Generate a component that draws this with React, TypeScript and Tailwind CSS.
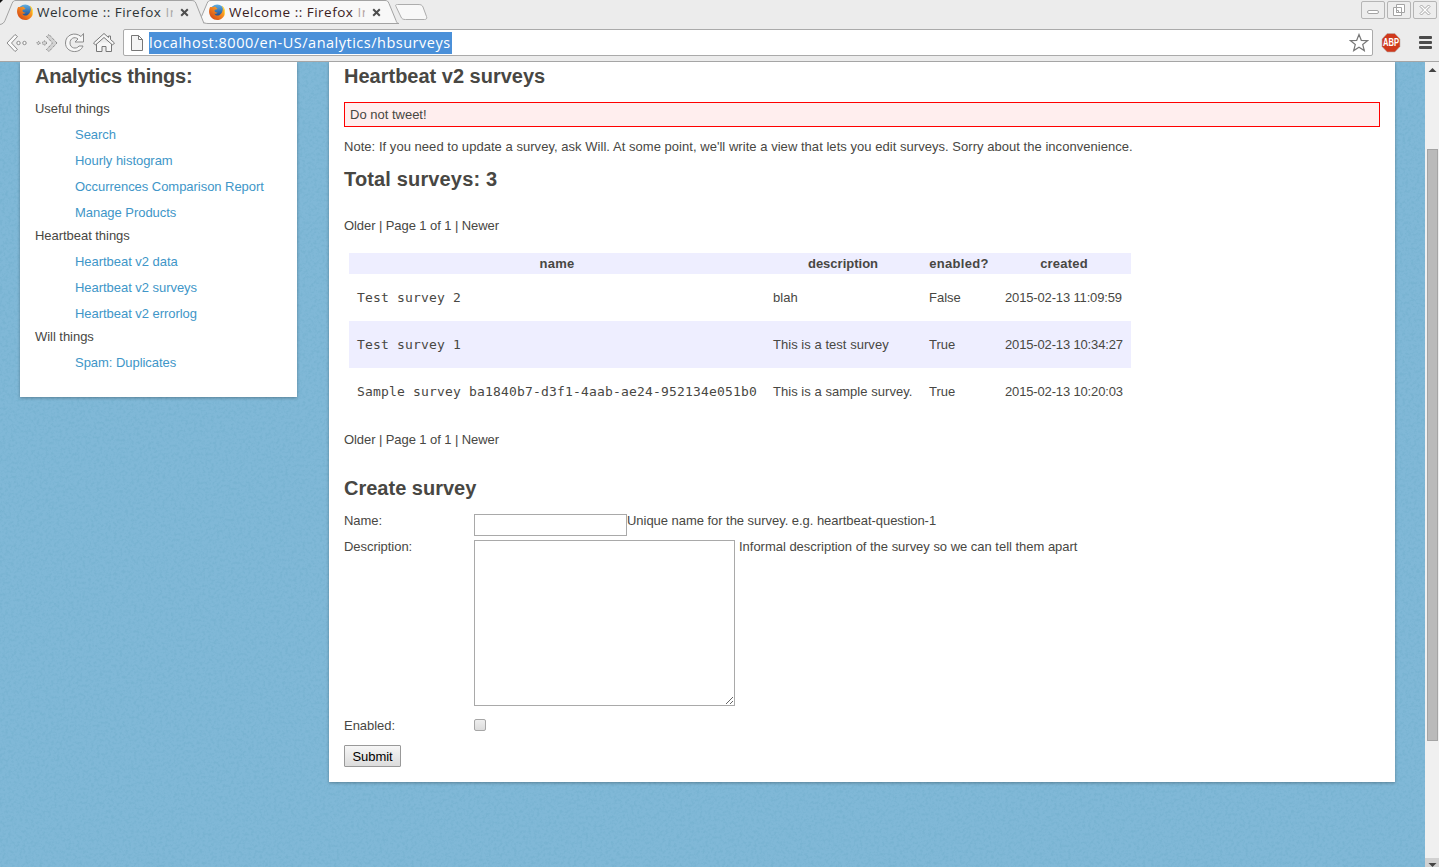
import type { ReactNode } from "react";

const sidebar = [
  {
    title: "Useful things",
    links: ["Search", "Hourly histogram", "Occurrences Comparison Report", "Manage Products"],
  },
  {
    title: "Heartbeat things",
    links: ["Heartbeat v2 data", "Heartbeat v2 surveys", "Heartbeat v2 errorlog"],
  },
  { title: "Will things", links: ["Spam: Duplicates"] },
];

const surveys = [
  { name: "Test survey 2", description: "blah", enabled: "False", created: "2015-02-13 11:09:59" },
  { name: "Test survey 1", description: "This is a test survey", enabled: "True", created: "2015-02-13 10:34:27" },
  {
    name: "Sample survey ba1840b7-d3f1-4aab-ae24-952134e051b0",
    description: "This is a sample survey.",
    enabled: "True",
    created: "2015-02-13 10:20:03",
  },
];

const FirefoxIcon = () => (
  <svg width="16" height="16" viewBox="0 0 16 16" className="shrink-0">
    <defs>
      <linearGradient id="fox" x1="1" y1="0" x2="0" y2="1">
        <stop offset="0" stopColor="#ffd23a" />
        <stop offset="0.45" stopColor="#f5871f" />
        <stop offset="1" stopColor="#c93a12" />
      </linearGradient>
      <linearGradient id="globe" x1="0" y1="0" x2="0" y2="1">
        <stop offset="0" stopColor="#5fb0e6" />
        <stop offset="1" stopColor="#123a80" />
      </linearGradient>
    </defs>
    <circle cx="8.2" cy="7.4" r="7" fill="url(#globe)" />
    <path
      d="M1 3.2C.2 5 0 6.600.1 8.300.5 12.800 4 16 8.200 16c4.300 0 7.700-3.400 7.800-7.800 0-3-1.300-5.400-3.300-6.800.8 1.200 1.200 2.400 1.100 3.600-.4 4.600-3.200 7-6 6.500-1.400-.3-2.300-1.200-2.400-2 1.200.5 2.400.1 3.300-.7-2.200 0-3.400-1.100-3.200-2.300.1-.9 1-1.100 2-.8 0-.8.6-1.100 1.200-1.500-1.400-.2-2.100-.8-2.400-1.700-.9 0-1.900.2-2.500.7C2.600 3 1.600 2.800 1 3.200Z"
      fill="url(#fox)"
    />
    <path d="M12.700 1.400c2 1.500 3.300 3.800 3.300 6.800 0 1.500-.4 3-1.200 4.200 1-3.800.4-8-2.100-11Z" fill="#ffe04d" />
  </svg>
);

const Tab = ({ textColor, fadeColor }: { textColor: string; fadeColor: string }) => (
  <div className="flex h-6 w-[192px] items-center pl-[17px]">
    <FirefoxIcon />
    <span
      className={`ml-1 flex w-[136px] overflow-hidden whitespace-pre font-['Open_Sans'] text-[13.5px] leading-6 tracking-[0.5px] ${textColor}`}
    >
      Welcome :: Firefox <span className={fadeColor}>In</span>
    </span>
    <svg width="9" height="9" viewBox="0 0 9 9" className="ml-[7px] shrink-0">
      <path d="M1.200 1.200l6.600 6.600m0-6.600l-6.600 6.600" stroke="#4d4d4d" strokeWidth="2" />
    </svg>
  </div>
);

const WindowButton = ({ children }: { children: ReactNode }) => (
  <div className="flex h-[18px] w-6 items-center justify-center rounded-[2px] border border-[#b5b5b5] bg-[#ededed]">
    <svg width="14" height="14" viewBox="0 0 14 14" fill="#fff" stroke="#a4a4a4">
      {children}
    </svg>
  </div>
);

const TabStrip = () => (
  <div className="relative flex h-6 justify-between">
    <svg width="440" height="26" viewBox="0 0 440 26" className="absolute top-0 left-0">
      <path d="M0 0h3L0 3Z" fill="#111" />
      <path
        d="M208 23.500c-5 0-8-3-6.500-7l5.500-13c1-2.500 2-3 4-3h174c2 0 3 .5 4 3l7 17c.6 1.800 1 3 3 3Z"
        fill="#f8f8f8"
        stroke="#a3a3a3"
      />
      <path d="M0 24.500c3-.5 4-2 5-4l7-17C13 1 14 .5 16 .5h175c3 0 4 .5 5 3l8 20" fill="#ececec" stroke="#a3a3a3" />
      <path
        d="M396 6.500c-1-1.500 0-2 1.500-2h20.500c3 0 4 .5 5 2.500l3.500 9.500c.8 2-.2 3-2 3h-19c-2.500 0-3.500-.5-4.500-2.500Z"
        fill="#f8f8f8"
        stroke="#adadad"
      />
    </svg>
    <div className="relative flex">
      <Tab textColor="text-[#2e3436]" fadeColor="text-[#aaa]" />
      <Tab textColor="text-[#3a2022]" fadeColor="text-[#b5a4a4]" />
    </div>
    <div className="mt-px mr-0.5 flex gap-0.5">
      <WindowButton>
        <rect x="1.500" y="7.500" width="11" height="3" rx="1.500" />
      </WindowButton>
      <WindowButton>
        <path d="M4.500 1.500h8v8h-8Z M1.500 4.500h8v8h-8Z M4.500 7.500h2v2h-2Z" />
      </WindowButton>
      <WindowButton>
        <path d="M2 3.500 3.500 2 7 5.500 10.500 2 12 3.500 8.500 7 12 10.500 10.500 12 7 8.500 3.500 12 2 10.500 5.500 7Z" />
      </WindowButton>
    </div>
  </div>
);

const Toolbar = () => (
  <div className="flex h-[38px] items-center border-b border-[#a5a5a5] pr-[7px] pl-1.5">
    <svg width="22" height="20" viewBox="0 0 22 20" fill="#fafafa" stroke="#8b8b8b" className="shrink-0">
      <path d="M1 10 9 1.500 11.500 3.500 5.500 10l6 6.500L9 18.500Z" />
      <circle cx="12.500" cy="10" r="1.700" />
      <circle cx="18.500" cy="10" r="1.700" />
    </svg>
    <svg width="22" height="20" viewBox="0 0 22 20" fill="#d2d2d2" stroke="#6d6d6d" className="ml-2 shrink-0">
      <path d="M21 10 13 1.500 10.500 3.500l6 6.500-6 6.500 2.500 2Z" strokeDasharray="1 1" />
      <circle cx="2.500" cy="10" r="1.500" strokeDasharray="1 1" />
      <circle cx="8.500" cy="10" r="2" strokeDasharray="1 1" />
    </svg>
    <svg width="22" height="22" viewBox="0 0 22 22" fill="#f6f6f6" stroke="#8b8b8b" className="ml-1.5 shrink-0">
      <path d="M19.500 1.500v8.500h-8.500l3-3C10.500 4 6 6.500 6 11c0 5.500 6.500 6.500 9 3h4C16 22.500 1.500 21 1.500 11c0-8.500 9.500-11.500 15.500-6.500Z" />
    </svg>
    <svg width="24" height="22" viewBox="0 0 24 22" fill="#f6f6f6" stroke="#777" className="ml-1.5 shrink-0">
      <path d="M4.500 10.500v9h5.500v-5h4v5h5.500v-9" />
      <path d="M12 1.500 1.500 11l2 2L12 5.500l8.500 7.500 2-2-4-3.500V4h-2v1.500Z" />
    </svg>
    <div className="ml-[7px] flex h-[27px] w-[1250px] items-center rounded-[2px] border border-[#aaa] bg-white pl-[7px]">
      <svg width="12" height="16" viewBox="0 0 12 16" fill="#f4f4f4" stroke="#777" className="shrink-0">
        <path d="M.5.5h7l4 4v11H.5Z M7.500.5v4h4" />
      </svg>
      <span className="ml-[6px] h-[22px] w-[303px] whitespace-nowrap bg-[#4a90d9] font-['Open_Sans'] text-[14.5px] leading-[22px] tracking-[0.5px] text-white">
        localhost:8000/en-US/analytics/hbsurveys
      </span>
      <svg width="20" height="20" viewBox="0 0 20 20" className="mr-[3px] ml-auto">
        <path
          d="M10 1.500l2.300 5.800 6.200.3-4.800 3.900 1.600 6.100L10 14.200l-5.300 3.400 1.600-6.100L1.500 7.600l6.200-.3Z"
          fill="#fff"
          stroke="#777"
          strokeWidth="1.200"
        />
      </svg>
    </div>
    <svg width="20" height="20" viewBox="0 0 20 20" className="ml-2 shrink-0">
      <path d="M6.200.5h7.600l5.200 5.500v7.600L13.800 19H6.200L1 13.600V6Z" fill="#d0391c" stroke="#b9b0ae" strokeWidth="0.600" />
      <text
        x="10"
        y="13.300"
        textAnchor="middle"
        textLength="16"
        lengthAdjust="spacingAndGlyphs"
        className="fill-white font-['Liberation_Sans'] text-[10px] font-bold"
      >
        ABP
      </text>
    </svg>
    <div className="ml-auto flex flex-col gap-0.5">
      <div className="h-[3px] w-[13px] rounded-[1px] bg-[#4a4a4a]" />
      <div className="h-[3px] w-[13px] rounded-[1px] bg-[#4a4a4a]" />
      <div className="h-[3px] w-[13px] rounded-[1px] bg-[#4a4a4a]" />
    </div>
  </div>
);

const Sidebar = () => (
  <nav className="h-[335px] w-[277px] shrink-0 bg-white px-[15px] shadow-[0_1px_3px_rgba(0,0,0,0.3)]">
    <h2 className="pt-0.5 text-[20px] leading-6 font-bold tracking-[-0.22px]">Analytics things:</h2>
    <ul className="mt-[11px] tracking-[-0.04px]">
      {sidebar.map((group) => (
        <li key={group.title} className="mb-[3px]">
          <div className="h-5">{group.title}</div>
          <ul className="pl-10">
            {group.links.map((link) => (
              <li key={link} className="h-[26px] pt-1.5 text-[#4096c8]">
                <a>{link}</a>
              </li>
            ))}
          </ul>
        </li>
      ))}
    </ul>
  </nav>
);

const Pager = () => <p className="tracking-[-0.08px]">Older | Page 1 of 1 | Newer</p>;

const SurveyTable = () => (
  <table className="ml-[5px] w-[782px] table-fixed">
    <thead>
      <tr className="h-[21px] bg-[#eeeeff]">
        <th className="w-[416px] p-0 tracking-[0.25px]">name</th>
        <th className="w-[156px] p-0">description</th>
        <th className="w-[76px] p-0 tracking-[0.3px]">enabled?</th>
        <th className="w-[134px] p-0 tracking-[0.2px]">created</th>
      </tr>
    </thead>
    <tbody>
      {surveys.map((survey) => (
        <tr key={survey.name} className="h-[47px] whitespace-nowrap even:bg-[#eeeeff]">
          <td className="px-2 py-0 font-['DejaVu_Sans_Mono'] tracking-[0.175px]">{survey.name}</td>
          <td className="px-2 py-0 tracking-[0.04px]">{survey.description}</td>
          <td className="px-2 py-0">{survey.enabled}</td>
          <td className="px-2 py-0 tracking-[-0.15px]">{survey.created}</td>
        </tr>
      ))}
    </tbody>
  </table>
);

const SurveyForm = () => (
  <form className="tracking-[-0.04px]">
    <div className="flex h-[29px] items-start">
      <label className="w-[130px]">Name:</label>
      <input className="mt-[3px] h-[22px] w-[153px] border border-[#a9a9a9] bg-white" />
      <span>Unique name for the survey. e.g. heartbeat-question-1</span>
    </div>
    <div className="flex h-[175px] items-start">
      <label className="-mt-[3px] w-[130px]">Description:</label>
      <textarea className="h-[166px] w-[261px] resize border border-[#a9a9a9] bg-white" />
      <span className="-mt-[3px] ml-1 tracking-[-0.02px]">Informal description of the survey so we can tell them apart</span>
    </div>
    <div className="flex h-[30px] items-start">
      <label className="mt-px w-[130px]">Enabled:</label>
      <input
        type="checkbox"
        className="mt-1 h-3 w-3 appearance-none rounded-[2px] border border-[#a6a6a6] bg-linear-to-b from-[#eee] to-[#dcdcdc]"
      />
    </div>
    <button className="h-[22px] w-[57px] rounded-[1px] border border-[#999] bg-linear-to-b from-[#f6f6f6] to-[#dcdcdc] pt-px text-black">
      Submit
    </button>
  </form>
);

const Scrollbar = () => (
  <div className="flex w-3.5 shrink-0 flex-col items-center bg-[#f0f0f0]">
    <svg width="14" height="15" viewBox="0 0 14 15">
      <path d="M3.500 10 7.500 6l4 4Z" fill="#444" />
    </svg>
    <div className="mt-[72px] ml-px h-[592px] w-[11px] border border-[#a4a4a4] bg-[#bababa]" />
    <div className="mt-auto h-[9px] w-3.5 bg-[#d1d1d1]">
      <svg width="14" height="9" viewBox="0 0 14 9">
        <path d="M3.500 5h8l-4 4Z" fill="#444" />
      </svg>
    </div>
  </div>
);

const App = () => {
  return (
    <div className="flex h-[867px] w-[1439px] flex-col overflow-hidden bg-[#ececec] font-['Liberation_Sans',sans-serif] text-[13px] leading-5 text-[#484743]">
      <TabStrip />
      <Toolbar />
      <div className="flex min-h-0 flex-1">
        <div className="relative flex flex-1 items-start overflow-hidden bg-[#80b8d7] pl-5">
          {/* paper grain over the blue background */}
          <svg className="absolute inset-0 h-full w-full opacity-20">
            <filter id="grain">
              <feTurbulence type="fractalNoise" baseFrequency="0.35" numOctaves="3" />
              <feColorMatrix values="0 0 0 0 0.1  0 0 0 0 0.35  0 0 0 0 0.5  3 0 0 0 -1.3" />
            </filter>
            <rect width="100%" height="100%" filter="url(#grain)" />
          </svg>
          <div className="relative flex items-start gap-8">
            <Sidebar />
            <main className="h-[720px] w-[1066px] bg-white px-[15px] shadow-[0_1px_3px_rgba(0,0,0,0.3)]">
              <h2 className="pt-0.5 text-[20px] leading-6 font-bold">Heartbeat v2 surveys</h2>
              <div className="mt-3.5 h-[25px] border border-[#f00] bg-[#ffeeee] pl-[5px] leading-[23px]">Do not tweet!</div>
              <p className="mt-2.5 tracking-[0.038px]">
                Note: If you need to update a survey, ask Will. At some point, we'll write a view that lets you edit surveys. Sorry
                about the inconvenience.
              </p>
              <h2 className="mt-2.5 mb-[25px] text-[20px] leading-6 font-bold tracking-[0.15px]">Total surveys: 3</h2>
              <Pager />
              <div className="mt-[17px] mb-[15px]">
                <SurveyTable />
              </div>
              <Pager />
              <h2 className="mt-[26px] mb-[11px] text-[20px] leading-6 font-bold">Create survey</h2>
              <SurveyForm />
            </main>
          </div>
        </div>
        <Scrollbar />
      </div>
    </div>
  );
};

export default App;
